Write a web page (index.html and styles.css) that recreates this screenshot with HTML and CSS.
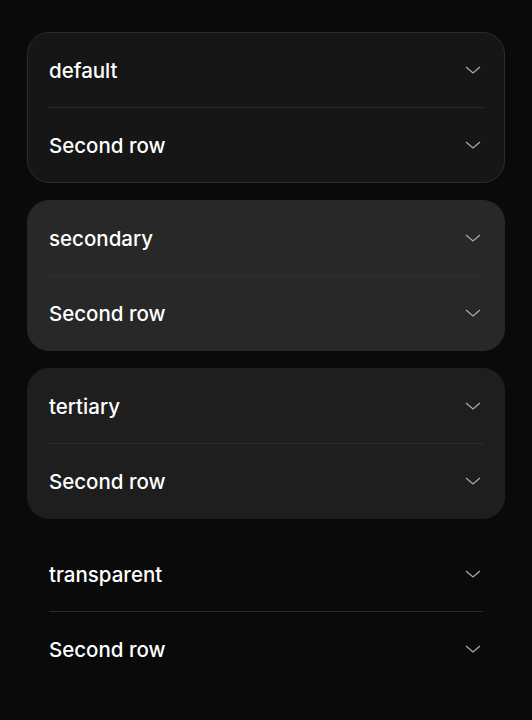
FILE: index.html
```html
<!DOCTYPE html>
<html>
<head>
<meta charset="utf-8">
<link rel="stylesheet" href="styles.css">
</head>
<body>
<div class="stack">
  <div class="card card-default">
    <div class="row"><span class="label">default</span><svg class="chev" viewBox="0 0 16 8"><path d="M1 1 L8 7 L15 1"/></svg></div>
    <div class="row"><span class="label">Second row</span><svg class="chev" viewBox="0 0 16 8"><path d="M1 1 L8 7 L15 1"/></svg></div>
  </div>
  <div class="card card-secondary">
    <div class="row"><span class="label">secondary</span><svg class="chev" viewBox="0 0 16 8"><path d="M1 1 L8 7 L15 1"/></svg></div>
    <div class="row"><span class="label">Second row</span><svg class="chev" viewBox="0 0 16 8"><path d="M1 1 L8 7 L15 1"/></svg></div>
  </div>
  <div class="card card-tertiary">
    <div class="row"><span class="label">tertiary</span><svg class="chev" viewBox="0 0 16 8"><path d="M1 1 L8 7 L15 1"/></svg></div>
    <div class="row"><span class="label">Second row</span><svg class="chev" viewBox="0 0 16 8"><path d="M1 1 L8 7 L15 1"/></svg></div>
  </div>
  <div class="card card-transparent">
    <div class="row"><span class="label">transparent</span><svg class="chev" viewBox="0 0 16 8"><path d="M1 1 L8 7 L15 1"/></svg></div>
    <div class="row"><span class="label">Second row</span><svg class="chev" viewBox="0 0 16 8"><path d="M1 1 L8 7 L15 1"/></svg></div>
  </div>
</div>
</body>
</html>
```
FILE: styles.css
```css
html, body {
  margin: 0;
  padding: 0;
  background: #0a0a0a;
}
body {
  font-family: Inter, "Noto Sans", sans-serif;
  color: #ffffff;
}
.stack {
  display: flex;
  flex-direction: column;
  gap: 17px;
  padding: 32px 27px;
}
.card {
  border-radius: 22px;
  border: 1px solid transparent;
  padding: 0 21px;
}
.card-default {
  background: #161616;
  border-color: #2c2c2c;
}
.card-secondary {
  background: #282828;
  border-color: #282828;
}
.card-tertiary {
  background: #1e1e1e;
  border-color: #1e1e1e;
}
.card-transparent {
  background: transparent;
}
.row {
  height: 74px;
  display: flex;
  align-items: center;
  justify-content: space-between;
}
.row + .row {
  border-top: 1px solid #2e2e2e;
}
.card-secondary .row + .row { border-top-color: #303030; }
.card-tertiary .row + .row { border-top-color: #2c2c2c; }
.card-transparent .row + .row { border-top-color: #2a2a2a; }
.label {
  font-size: 20.5px;
  font-weight: 450;
  letter-spacing: 0;
}
.chev {
  width: 16px;
  height: 8px;
  margin-right: 2px;
  fill: none;
  stroke: #a8a8a8;
  stroke-width: 1.3;
}
```
